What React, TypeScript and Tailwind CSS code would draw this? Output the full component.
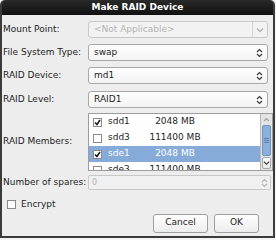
import React from 'react';

const Chevrons = ({ muted }: { muted?: boolean }) => (
  <svg width="7" height="10" viewBox="0 0 7 10" fill="none" stroke={muted ? '#b5b5b5' : '#3a3a3a'} strokeWidth="1.2">
    <path d="M1 4 L3.5 1.5 L6 4" />
    <path d="M1 6 L3.5 8.5 L6 6" />
  </svg>
);

const ChevronDown = ({ color = '#b0b0b0' }: { color?: string }) => (
  <svg width="8" height="6" viewBox="0 0 8 6" fill="none" stroke={color} strokeWidth="1.3">
    <path d="M1 1.5 L4 4.5 L7 1.5" />
  </svg>
);

const Check = ({ checked }: { checked: boolean }) => (
  <span className="flex h-[9px] w-[9px] items-center justify-center border border-[#8a8a8a] bg-white">
    {checked && (
      <svg width="7" height="7" viewBox="0 0 7 7" fill="none" stroke="#1e1e1e" strokeWidth="1.6">
        <path d="M1 3.5 L3 5.5 L6 1" />
      </svg>
    )}
  </span>
);

const Label = ({ children }: { children: React.ReactNode }) => (
  <div className="w-[85px] shrink-0 text-[9px] text-[#1e1e1e]">{children}</div>
);

const Combo = ({ value }: { value: string }) => (
  <div className="flex h-[17px] w-[180px] items-center rounded-[3px] border border-[#a8a8a8] bg-gradient-to-b from-white to-[#f3f3f3] pl-[5px] pr-[4px] text-[9px] text-[#1e1e1e]">
    <span className="flex-1">{value}</span>
    <Chevrons />
  </div>
);

const members = [
  { name: 'sdd1', size: '2048 MB', checked: true, selected: false },
  { name: 'sdd3', size: '111400 MB', checked: false, selected: false },
  { name: 'sde1', size: '2048 MB', checked: true, selected: true },
  { name: 'sde3', size: '111400 MB', checked: false, selected: false },
];

export default function App() {
  return (
    <div className="h-[240px] w-[276px] bg-[#f4f4f4] font-['DejaVu_Sans',sans-serif]">
      <div className="flex h-[238px] w-[275px] flex-col rounded-t-[5px] bg-[#3b3b3b] px-[2px] pb-[2px]">
        <div className="flex h-[15px] shrink-0 items-center justify-center rounded-t-[5px] bg-gradient-to-b from-[#2a2a2a] to-[#111] text-[9px] font-bold text-white">
          Make RAID Device
        </div>
        <div className="flex flex-1 flex-col bg-[#ededed] pl-[1px] pt-[6px]">
          <div className="flex items-center">
            <Label>Mount Point:</Label>
            <div className="flex h-[17px] w-[180px] items-center rounded-[3px] border border-[#c8c8c8] bg-[#f2f2f2] text-[9px] text-[#b4b4b4]">
              <span className="flex-1 pl-[5px]">&lt;Not Applicable&gt;</span>
              <span className="flex h-full w-[15px] items-center justify-center border-l border-[#d4d4d4]">
                <ChevronDown />
              </span>
            </div>
          </div>
          <div className="mt-[6px] flex items-center">
            <Label>File System Type:</Label>
            <Combo value="swap" />
          </div>
          <div className="mt-[6px] flex items-center">
            <Label>RAID Device:</Label>
            <Combo value="md1" />
          </div>
          <div className="mt-[7px] flex items-center">
            <Label>RAID Level:</Label>
            <Combo value="RAID1" />
          </div>
          <div className="mt-[5px] flex items-center">
            <Label>RAID Members:</Label>
            <div className="flex h-[58px] w-[187px] border border-[#9c9c9c] bg-white">
              <div className="flex-1 overflow-hidden">
                {members.map((m) => (
                  <div
                    key={m.name}
                    className={`flex h-[16px] shrink-0 items-center whitespace-nowrap text-[9px] ${m.selected ? 'bg-[#86abd9] text-white' : 'text-[#1e1e1e]'}`}
                  >
                    <span className="ml-[4px]">
                      <Check checked={m.checked} />
                    </span>
                    <span className="ml-[6px] w-[36px]">{m.name}</span>
                    <span className="w-[62px] text-center">{m.size}</span>
                  </div>
                ))}
              </div>
              <div className="flex w-[12px] flex-col border-l border-[#b8b8b8] bg-[#e4e4e4]">
                <div className="flex h-[11px] items-center justify-center">
                  <svg width="7" height="5" viewBox="0 0 7 5" fill="none" stroke="#a0a0a0" strokeWidth="1.2">
                    <path d="M1 4 L3.5 1.5 L6 4" />
                  </svg>
                </div>
                <div className="mx-[1px] flex h-[31px] flex-col items-center justify-center gap-[1px] rounded-[2px] border border-[#6f92c0] bg-[#8cb0dc]">
                  <span className="h-px w-[5px] bg-[#5d7fae]" />
                  <span className="h-px w-[5px] bg-[#5d7fae]" />
                  <span className="h-px w-[5px] bg-[#5d7fae]" />
                </div>
                <div className="mx-[1px] mt-auto mb-[1px] flex h-[12px] items-center justify-center rounded-[2px] border border-[#a8a8a8] bg-gradient-to-b from-white to-[#e8e8e8]">
                  <ChevronDown color="#2e2e2e" />
                </div>
              </div>
            </div>
          </div>
          <div className="mt-[4px] flex items-center">
            <Label>Number of spares:</Label>
            <div className="flex h-[15px] w-[183px] items-center rounded-[2px] border border-[#c8c8c8] bg-[#f0f0f0] text-[8px] text-[#b4b4b4]">
              <span className="flex-1 pl-[3px]">0</span>
              <span className="mr-[2px]">
                <Chevrons muted />
              </span>
            </div>
          </div>
          <div className="ml-[4px] mt-[8px] flex items-center gap-[5px] text-[9px] text-[#1e1e1e]">
            <Check checked={false} />
            <span>Encrypt</span>
          </div>
          <div className="mt-[2px] flex justify-end gap-[6px] pr-[14px]">
            <button className="h-[19px] w-[55px] rounded-[3px] border border-[#a0a0a0] bg-gradient-to-b from-white to-[#ececec] text-[9px] text-[#1e1e1e]">
              Cancel
            </button>
            <button className="h-[19px] w-[45px] rounded-[3px] border border-[#a0a0a0] bg-gradient-to-b from-white to-[#ececec] text-[9px] text-[#1e1e1e]">
              OK
            </button>
          </div>
        </div>
      </div>
    </div>
  );
}
